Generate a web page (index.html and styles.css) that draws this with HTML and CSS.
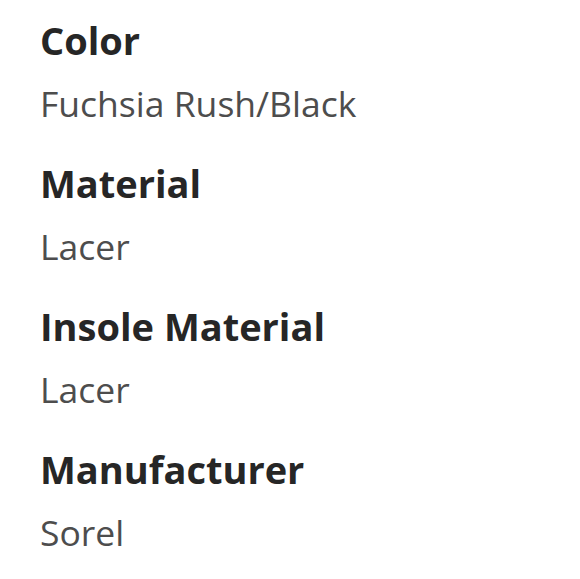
FILE: index.html
```html
<!DOCTYPE html>
<html>
<head>
<meta charset="utf-8">
<link rel="stylesheet" href="styles.css">
</head>
<body>
<dl class="specs">
  <div class="spec">
    <dt class="spec-name">Color</dt>
    <dd class="spec-value">Fuchsia Rush/Black</dd>
  </div>
  <div class="spec">
    <dt class="spec-name">Material</dt>
    <dd class="spec-value">Lacer</dd>
  </div>
  <div class="spec">
    <dt class="spec-name">Insole Material</dt>
    <dd class="spec-value">Lacer</dd>
  </div>
  <div class="spec">
    <dt class="spec-name">Manufacturer</dt>
    <dd class="spec-value">Sorel</dd>
  </div>
</dl>
</body>
</html>
```
FILE: styles.css
```css
html, body {
  margin: 0;
  padding: 0;
  background: #ffffff;
}
body {
  font-family: "Open Sans", "Noto Sans", sans-serif;
}
.specs {
  margin: 0;
  padding: 10px 0 0 40px;
  display: flex;
  flex-direction: column;
}
.spec-name {
  font-size: 38px;
  font-weight: 700;
  color: #262626;
  line-height: 60px;
}
.spec-value {
  margin: 0;
  font-size: 35.5px;
  font-weight: 400;
  color: #4d4d4d;
  line-height: 66px;
  padding-bottom: 17px;
}
```
